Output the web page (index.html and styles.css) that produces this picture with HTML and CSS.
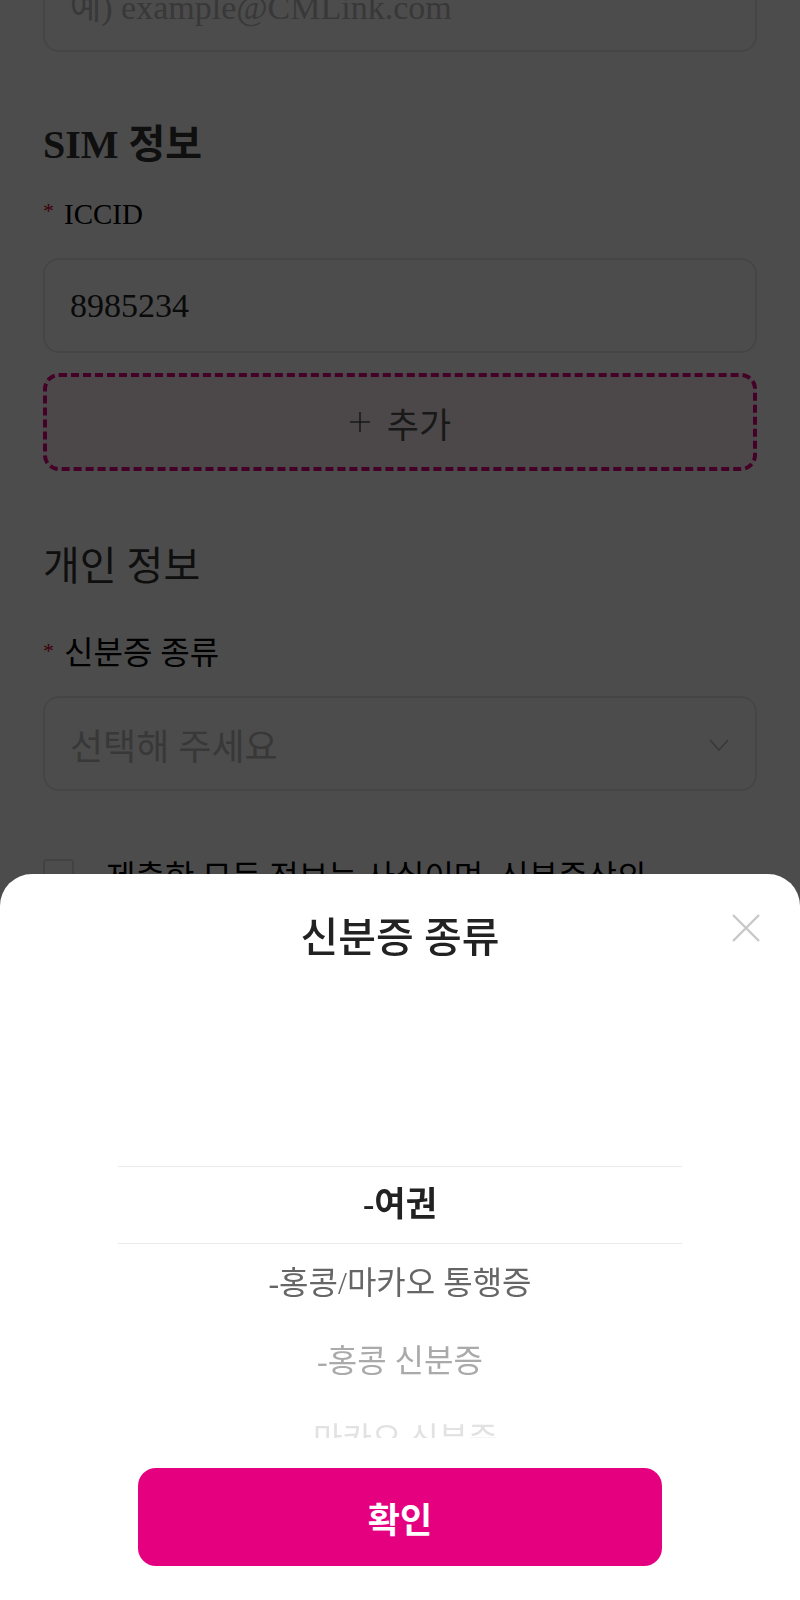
FILE: index.html
```html
<!DOCTYPE html>
<html lang="ko">
<head>
<meta charset="UTF-8" />
<meta name="viewport" content="width=device-width, initial-scale=1" />
<title>실명 등록</title>
<link rel="stylesheet" href="styles.css">
</head>
<body>
<main class="page">
    <div class="field-box placeholder">예) example@CMLink.com</div>

    <h2 class="section-title sim-title">SIM 정보</h2>
    <label class="field-label"><span class="req">*</span>ICCID</label>
    <div class="field-box">8985234</div>
    <button type="button" class="add-btn">
        <svg class="plus" width="22" height="22" viewBox="0 0 22 22">
            <path d="M11 1v20M1 11h20" stroke="#555" stroke-width="1.6" fill="none" />
        </svg>
        <span>추가</span>
    </button>

    <h2 class="section-title personal-title">개인 정보</h2>
    <label class="field-label personal-label"><span class="req">*</span>신분증 종류</label>
    <div class="field-box select-box">
        <span class="placeholder">선택해 주세요</span>
        <svg class="chevron" width="20" height="12" viewBox="0 0 20 12">
            <path d="M1 1l9 10 9-10" stroke="#bbb" stroke-width="1.6" fill="none" />
        </svg>
    </div>

    <div class="agree-row">
        <span class="checkbox"></span>
        <p>제출한 모든 정보는 사실이며, 신분증상의</p>
    </div>
</main>

<div class="mask"></div>

<section class="sheet">
    <header class="sheet-header">
        <h3>신분증 종류</h3>
        <button type="button" class="close-btn" aria-label="닫기">
            <svg width="30" height="30" viewBox="0 0 30 30">
                <path d="M2 2l26 26M28 2L2 28" stroke="#c8c8c8" stroke-width="2.4" fill="none" />
            </svg>
        </button>
    </header>

    <div class="picker">
        <div class="picker-frame"></div>
        <ul class="picker-list">
            <li class="selected">-여권</li>
            <li class="near">-홍콩/마카오 통행증</li>
            <li class="far">-홍콩 신분증</li>
            <li class="farther">-마카오 신분증</li>
        </ul>
    </div>

    <div class="sheet-footer">
        <button type="button" class="confirm-btn">확인</button>
    </div>
</section>
</body>
</html>
```

FILE: styles.css
```css
* {
    box-sizing: border-box;
}
body {
    margin: 0;
    background: #fff;
    font-family: "Liberation Serif", "Noto Sans CJK KR", serif;
    color: #000;
    overflow: hidden;
}
.page {
    padding: 0 43px;
}
.field-box {
    height: 95px;
    border: 2px solid #e6e6e6;
    border-radius: 16px;
    padding: 0 25px;
    display: flex;
    align-items: center;
    font-size: 34px;
    color: #222;
}
.page > .field-box:first-child {
    margin-top: -43px;
}
.placeholder {
    color: #bbb;
}
.section-title {
    margin: 0;
    font-size: 40px;
    line-height: 48px;
    color: #333;
}
.sim-title {
    margin-top: 69px;
    font-weight: bold;
}
.personal-title {
    margin-top: 72px;
    font-weight: normal;
}
.field-label {
    display: block;
    margin: 22px 0 24px;
    font-size: 29px;
    line-height: 40px;
}
.personal-label {
    margin: 40px 0 23px;
    font-size: 32px;
}
.req {
    color: #d0021b;
    font-size: 22px;
    vertical-align: 6px;
    margin-right: 10px;
}
.add-btn {
    width: 100%;
    height: 98px;
    margin-top: 20px;
    border: 4px dashed #e4007f;
    border-radius: 16px;
    background: #fdf2f7;
    display: flex;
    align-items: center;
    justify-content: center;
    gap: 16px;
    font-family: inherit;
    font-size: 35px;
    color: #555;
}
.select-box {
    justify-content: space-between;
    padding-right: 26px;
}
.select-box .placeholder {
    font-size: 36px;
}
.chevron {
    margin-top: 2px;
}
.agree-row {
    display: flex;
    align-items: flex-start;
    margin-top: 68px;
}
.checkbox {
    flex: none;
    width: 31px;
    height: 31px;
    border: 2px solid #ddd;
    border-radius: 4px;
}
.agree-row p {
    margin: -4px 0 0 32px;
    font-size: 32px;
    line-height: 44px;
    white-space: nowrap;
}
.mask {
    position: fixed;
    inset: 0;
    background: rgba(0, 0, 0, 0.7);
    z-index: 10;
}
.sheet {
    position: fixed;
    left: 0;
    right: 0;
    bottom: 0;
    height: 726px;
    background: #fff;
    border-radius: 32px 32px 0 0;
    z-index: 11;
    display: flex;
    flex-direction: column;
}
.sheet-header {
    position: relative;
    height: 120px;
    display: flex;
    align-items: center;
    justify-content: center;
}
.sheet-header h3 {
    margin: 0;
    font-size: 41px;
    font-weight: 500;
    color: #222;
}
.close-btn {
    position: absolute;
    top: 39px;
    right: 39px;
    width: 30px;
    height: 30px;
    padding: 0;
    border: none;
    background: none;
}
.close-btn svg {
    display: block;
}
.picker {
    position: relative;
    height: 444px;
    overflow: hidden;
}
.picker-frame {
    position: absolute;
    top: 172px;
    left: 118px;
    right: 118px;
    height: 78px;
    border-top: 1px solid #ebebeb;
    border-bottom: 1px solid #ebebeb;
}
.picker-list {
    list-style: none;
    margin: 0;
    padding: 172px 0 0;
    text-align: center;
}
.picker-list li {
    height: 78px;
    line-height: 78px;
    font-size: 32px;
    color: #666;
}
.picker-list .selected {
    color: #222;
    font-size: 34px;
    font-weight: bold;
}
.picker-list .far {
    color: #aaa;
}
.picker-list .farther {
    color: #e2e2e2;
}
.sheet-footer {
    padding: 30px 138px 34px;
}
.confirm-btn {
    width: 100%;
    height: 98px;
    border: none;
    border-radius: 18px;
    background: #e4007f;
    color: #fff;
    font-family: inherit;
    font-size: 35px;
    font-weight: bold;
}
```
